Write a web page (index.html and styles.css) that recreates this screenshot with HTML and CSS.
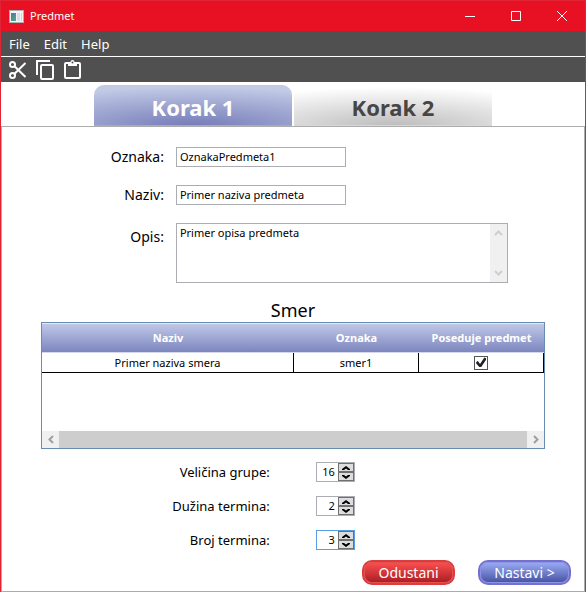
FILE: index.html
```html
<!DOCTYPE html>
<html lang="sr-Latn">
<head>
<meta charset="utf-8">
<meta name="viewport" content="width=device-width, initial-scale=1">
<title>Predmet</title>
<link rel="stylesheet" href="styles.css">
</head>
<body>
<div class="window">
  <header class="titlebar">
    <svg class="app-icon" width="15" height="13" viewBox="0 0 15 13" aria-hidden="true">
      <defs><linearGradient id="app" x1="0" y1="0" x2="1" y2="1"><stop offset="0" stop-color="#4a78b0"/><stop offset="1" stop-color="#5aa878"/></linearGradient></defs>
      <rect width="15" height="13" fill="#a9b0b5"/><rect x="1" y="1" width="13" height="11" fill="#f4f4f4"/>
      <rect x="2" y="3" width="5" height="8" fill="url(#app)"/><rect x="8" y="3" width="3" height="8" fill="#dcdfe2"/><rect x="12" y="3" width="1" height="8" fill="#d0d4d8"/>
    </svg>
    <h1 class="title">Predmet</h1>
    <button class="caption" aria-label="Minimize"><svg width="10" height="10" viewBox="0 0 10 10"><path d="M0 5.500H10"/></svg></button>
    <button class="caption" aria-label="Maximize"><svg width="10" height="10" viewBox="0 0 10 10"><path d="M.5 .5h9v9h-9z"/></svg></button>
    <button class="caption" aria-label="Close"><svg width="10" height="10" viewBox="0 0 10 10"><path d="M0 0l10 10M10 0L0 10"/></svg></button>
  </header>
  <nav class="menubar">
    <button class="menu">File</button>
    <button class="menu">Edit</button>
    <button class="menu">Help</button>
  </nav>
  <div class="toolbar" role="toolbar">
    <button class="tool" aria-label="Cut"><svg width="18" height="20" viewBox="0 0 18 20"><circle cx="3.500" cy="4.500" r="2.500"/><circle cx="3.500" cy="15.500" r="2.500"/><path d="M5.500 6.200L16.500 17M5.500 13.800L16.500 3"/></svg></button>
    <button class="tool" aria-label="Copy"><svg width="18" height="20" viewBox="0 0 18 20"><path d="M1 15V1H14"/><rect x="5" y="5" width="12" height="14" rx="1"/></svg></button>
    <button class="tool" aria-label="Paste"><svg width="18" height="20" viewBox="0 0 18 20"><rect x="2" y="3" width="15" height="15" rx="1"/><path class="solid" d="M5 2h2.500a2 2 0 0 1 4 0H14v4H5z"/><circle class="hole" cx="9.500" cy="2.500" r="1"/></svg></button>
  </div>
  <div class="tabs" role="tablist">
    <button class="tab tab-active" role="tab" aria-selected="true">Korak 1</button>
    <button class="tab" role="tab" aria-selected="false">Korak 2</button>
  </div>
  <main class="panel">
    <form class="form">
      <div class="fields">
        <label for="oznaka">Oznaka:</label>
        <input class="text" id="oznaka" type="text" value="OznakaPredmeta1">
        <label for="naziv">Naziv:</label>
        <input class="text" id="naziv" type="text" value="Primer naziva predmeta">
        <label class="label-top" for="opis">Opis:</label>
        <div class="area">
          <textarea id="opis">Primer opisa predmeta</textarea>
          <div class="vscroll">
            <svg width="9" height="6" viewBox="0 0 9 6"><path d="M1 5l3.500-3.500L8 5"/></svg>
            <svg width="9" height="6" viewBox="0 0 9 6"><path d="M1 1l3.500 3.500L8 1"/></svg>
          </div>
        </div>
      </div>
      <h2 class="heading">Smer</h2>
      <div class="grid">
        <table>
          <colgroup><col><col class="col-side"><col class="col-side"></colgroup>
          <thead><tr><th>Naziv</th><th>Oznaka</th><th>Poseduje predmet</th></tr></thead>
          <tbody><tr><td>Primer naziva smera</td><td>smer1</td><td><input class="check" type="checkbox" checked aria-label="Poseduje predmet"></td></tr></tbody>
        </table>
        <div class="hscroll">
          <button type="button" aria-label="Levo"><svg width="6" height="9" viewBox="0 0 6 9"><path d="M5 1L1.500 4.500 5 8"/></svg></button>
          <div class="thumb"></div>
          <button type="button" aria-label="Desno"><svg width="6" height="9" viewBox="0 0 6 9"><path d="M1 1l3.500 3.500L1 8"/></svg></button>
        </div>
      </div>
      <div class="numbers">
        <label for="grupa">Veličina grupe:</label>
        <div class="spin"><input id="grupa" type="text" value="16">
          <div class="steps"><button type="button" aria-label="Više"><svg width="8" height="4" viewBox="0 0 8 4"><path d="M0 4V3L4 0 8 3v1H6L4 2.500 2 4z"/></svg></button><button type="button" aria-label="Manje"><svg width="8" height="4" viewBox="0 0 8 4"><path d="M0 0v1l4 3 4-3V0H6L4 1.500 2 0z"/></svg></button></div></div>
        <label for="duzina">Dužina termina:</label>
        <div class="spin"><input id="duzina" type="text" value="2">
          <div class="steps"><button type="button" aria-label="Više"><svg width="8" height="4" viewBox="0 0 8 4"><path d="M0 4V3L4 0 8 3v1H6L4 2.500 2 4z"/></svg></button><button type="button" aria-label="Manje"><svg width="8" height="4" viewBox="0 0 8 4"><path d="M0 0v1l4 3 4-3V0H6L4 1.500 2 0z"/></svg></button></div></div>
        <label for="broj">Broj termina:</label>
        <div class="spin spin-focus"><input id="broj" type="text" value="3">
          <div class="steps"><button type="button" aria-label="Više"><svg width="8" height="4" viewBox="0 0 8 4"><path d="M0 4V3L4 0 8 3v1H6L4 2.500 2 4z"/></svg></button><button type="button" aria-label="Manje"><svg width="8" height="4" viewBox="0 0 8 4"><path d="M0 0v1l4 3 4-3V0H6L4 1.500 2 0z"/></svg></button></div></div>
      </div>
      <div class="actions">
        <button class="pill pill-red" type="button">Odustani</button>
        <button class="pill pill-blue" type="button">Nastavi &gt;</button>
      </div>
    </form>
  </main>
</div>
</body>
</html>
```
FILE: styles.css
```css
* { box-sizing: border-box; }

body {
  margin: 0;
  background: #fff;
  color: #000;
  font-family: "Noto Sans", "Open Sans", sans-serif;
  font-size: 14px;
  line-height: 20px;
}

button, input, textarea {
  margin: 0;
  padding: 0;
  border: 0;
  border-radius: 0;
  background: none;
  color: inherit;
  font: inherit;
}

svg { display: block; }

.window {
  display: flex;
  flex-direction: column;
  min-height: 100vh;
  border: 1px solid #e02436;
  border-bottom: 0;
}

.titlebar {
  display: flex;
  align-items: center;
  height: 30px;
  padding-left: 8px;
  background: #e81123;
  color: #fff;
}

.title {
  flex: 1;
  margin: 0 0 0 6px;
  font-size: 11px;
  font-weight: 400;
}

.caption {
  display: grid;
  place-items: center;
  width: 46px;
  height: 30px;
}

.caption svg { fill: none; stroke: #fff; }

.menubar {
  display: flex;
  gap: 14px;
  height: 25px;
  padding: 0 8px;
  background: #505050;
  color: #fff;
  font-size: 13px;
}

.toolbar {
  display: flex;
  align-items: center;
  gap: 9px;
  height: 25px;
  margin-top: 1px;
  padding: 0 8px;
  background: #505050;
}

.tool svg { fill: none; stroke: #fff; stroke-width: 2; }

.tool .solid { fill: #fff; stroke: none; }

.tool .hole { fill: #505050; stroke: none; }

.tabs {
  display: flex;
  justify-content: center;
  gap: 2px;
  padding-top: 3px;
}

.tab {
  flex: 0 1 198px;
  height: 41px;
  padding-top: 3px;
  background: radial-gradient(ellipse 110% 95% at 50% 100%, #bcbcbc, #fff);
  box-shadow: inset 0 -1px #d8d8d8;
  color: #464646;
  font-size: 22px;
  font-weight: 700;
}

.tab-active {
  border-radius: 10px 10px 0 0;
  background: radial-gradient(ellipse 110% 95% at 50% 100%, #747bb8, #c2cae6);
  box-shadow: inset 0 -1px #a4a9d2;
  color: #fff;
}

.panel {
  flex: 1;
  border: 1px solid #acacac;
}

.fields {
  display: grid;
  grid-template-columns: 32% 1fr;
  align-items: center;
  gap: 18px 12px;
  padding: 20px 76px 0 0;
}

.fields label, .numbers label { text-align: right; }

.fields .label-top {
  align-self: start;
  padding-top: 4px;
}

.text {
  width: 170px;
  height: 20px;
  padding: 0 3px;
  border: 1px solid #abadb3;
  background: #fff;
  font-size: 11px;
}

.area {
  display: flex;
  height: 60px;
  border: 1px solid #abadb3;
}

.area textarea {
  flex: 1;
  min-width: 0;
  padding: 0 3px;
  overflow: hidden;
  resize: none;
  font-size: 11px;
  line-height: 18px;
}

.vscroll {
  display: flex;
  flex-direction: column;
  justify-content: space-between;
  align-items: center;
  width: 17px;
  padding: 6px 0;
  background: #f0f0f0;
}

.vscroll svg { fill: none; stroke: #cfcfcf; stroke-width: 2; }

.heading {
  margin: 15px 0 0;
  font-size: 18px;
  font-weight: 400;
  line-height: 24px;
  text-align: center;
}

.grid {
  display: flex;
  flex-direction: column;
  justify-content: space-between;
  height: 127px;
  margin: 0 39px;
  border: 1px solid #688caf;
}

table {
  width: 100%;
  table-layout: fixed;
  border-collapse: separate;
  border-spacing: 0;
  font-size: 11px;
  text-align: center;
}

.col-side { width: 125px; }

thead tr { background: linear-gradient(#c2cae8, #7a84bd); }

th {
  height: 30px;
  padding: 0;
  border-top: 1px solid #e4e8f4;
  border-bottom: 1px solid #d4d8ea;
  color: #fff;
  font-weight: 700;
}

td {
  height: 20px;
  padding: 0;
  border-right: 1px solid #000;
  border-bottom: 1px solid #000;
  line-height: 18px;
}

.check {
  display: block;
  width: 14px;
  height: 14px;
  margin: 0 auto;
  border: 1px solid #555;
  appearance: none;
  background: #fff;
}

.check:checked::after {
  content: "";
  display: block;
  width: 12px;
  height: 12px;
  background: #212121;
  clip-path: polygon(10% 45%, 24% 38%, 42% 62%, 78% 8%, 92% 14%, 92% 28%, 52% 88%, 36% 88%, 10% 58%);
}

.hscroll {
  display: flex;
  height: 17px;
}

.hscroll button {
  display: grid;
  place-items: center;
  width: 17px;
  background: #f0f0f0;
}

.hscroll svg { fill: none; stroke: #a0a0a0; stroke-width: 2; }

.thumb { flex: 1; background: #cdcdcd; }

.numbers {
  display: grid;
  grid-template-columns: 46% auto;
  align-items: center;
  justify-content: start;
  gap: 14px 46px;
  margin-top: 13px;
  font-size: 13px;
}

.spin {
  display: flex;
  width: 39px;
  height: 20px;
  border: 1px solid #abadb3;
  font-size: 11px;
}

.spin-focus { border-color: #569de5; }

.spin > input {
  flex: 1;
  min-width: 0;
  padding-right: 3px;
  text-align: right;
}

.steps {
  display: flex;
  flex-direction: column;
  width: 16px;
}

.steps button {
  display: grid;
  place-items: center;
  flex: 1;
  border: 1px solid #707070;
  background: #dddddd;
}

.steps svg { fill: #000; }

.actions {
  display: flex;
  justify-content: flex-end;
  gap: 23px;
  margin: 10px 13px 5px;
}

.pill {
  width: 93px;
  height: 25px;
  border: 2px solid;
  border-radius: 10px;
  color: #fff;
}

.pill-red {
  border-color: #dc3c3c;
  background: linear-gradient(#ff5050, #a81c22) padding-box;
  box-shadow: inset 0 0 0 1px #e25050;
}

.pill-blue {
  border-color: #7470cf;
  background: linear-gradient(#9caef8, #4650a0) padding-box;
  box-shadow: inset 0 0 0 1px #8c94e4;
}
```
